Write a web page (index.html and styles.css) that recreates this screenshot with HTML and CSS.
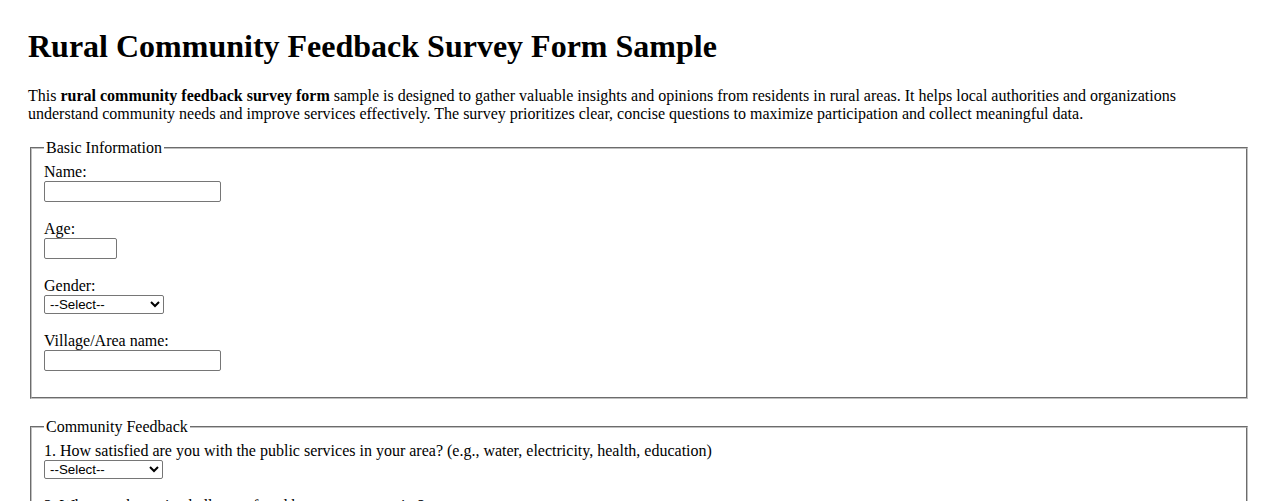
FILE: index.html
```html
<!DOCTYPE html>
<html lang="en">
<head>
<meta charset="utf-8">
<title>Rural Community Feedback Survey Form Sample</title>
<link rel="stylesheet" href="styles.css">
</head>
<body>
<div class="page">
<h1 class="title">Rural Community Feedback Survey Form Sample</h1>
<p class="intro">This <strong>rural community feedback survey form</strong> sample is designed to gather valuable insights and opinions from residents in rural areas. It helps local authorities and organizations understand community needs and improve services effectively. The survey prioritizes clear, concise questions to maximize participation and collect meaningful data.</p>
<form class="survey">
<fieldset class="group">
<legend>Basic Information</legend>
<label for="name">Name:</label><br>
<input class="field field-wide" type="text" id="name"><br><br>
<label for="age">Age:</label><br>
<input class="field field-short" type="text" id="age"><br><br>
<label for="gender">Gender:</label><br>
<select class="pick pick-gender" id="gender"><option>--Select--</option><option>Male</option><option>Female</option><option>Other</option></select><br><br>
<label for="village">Village/Area name:</label><br>
<input class="field field-wide" type="text" id="village"><br><br>
</fieldset>
<fieldset class="group">
<legend>Community Feedback</legend>
<label for="q1">1. How satisfied are you with the public services in your area? (e.g., water, electricity, health, education)</label><br>
<select class="pick" id="q1"><option>--Select--</option><option>Very satisfied</option><option>Satisfied</option><option>Neutral</option><option>Dissatisfied</option></select><br><br>
<label for="q2">2. What are the main challenges faced by your community?</label><br>
<textarea class="area" id="q2" rows="4" cols="50"></textarea><br><br>
</fieldset>
</form>
</div>
</body>
</html>
```
FILE: styles.css
```css
html, body {
  margin: 0;
  padding: 0;
  background: #ffffff;
}
body {
  font-family: "Liberation Serif", "Times New Roman", serif;
  font-size: 16px;
  color: #000000;
}
.page {
  padding: 28px 28px 28px 28px;
}
.title {
  font-size: 32px;
  font-weight: bold;
  margin: 0 0 22px 0;
  line-height: 37px;
}
.intro {
  margin: 0 0 16px 0;
  line-height: 18px;
}
.survey {
  margin: 0;
}
.group {
  margin: 0 2px 19px 2px;
  padding: 6px 12px 8px 12px;
  border: 2px groove #c0c0c0;
  line-height: 18px;
}
.group legend {
  padding: 0 2px;
}
.field {
  box-sizing: border-box;
  height: 21px;
  border: 1px solid #767676;
  border-radius: 2px;
  padding: 1px 2px;
  font-family: "Liberation Sans", Arial, sans-serif;
  font-size: 13.33px;
  margin: 0;
  vertical-align: baseline;
}
.field-wide { width: 177px; }
.field-short { width: 73px; }
.pick {
  box-sizing: border-box;
  width: 119px;
  height: 19px;
  font-family: "Liberation Sans", Arial, sans-serif;
  font-size: 13.33px;
  border: 1px solid #767676;
  border-radius: 2px;
  margin: 0;
  padding: 0 0 0 1px;
  background: #ffffff;
  color: #000000;
}
.pick-gender { width: 120px; }
.area {
  font-family: "Liberation Mono", monospace;
  font-size: 13.33px;
}
```
